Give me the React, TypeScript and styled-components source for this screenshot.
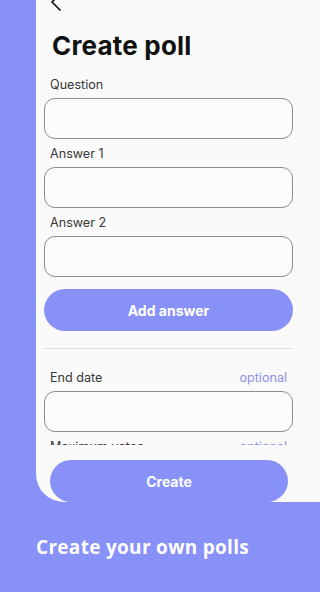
import React from "react";
import styled, { createGlobalStyle } from "styled-components";

const Global = createGlobalStyle`
  html, body { margin: 0; padding: 0; background: #8891f7; }
  * { box-sizing: border-box; }
`;

const Page = styled.div`
  width: 100%;
  height: 592px;
  overflow: hidden;
  background: #8891f7;
  display: flex;
  flex-direction: column;
`;

const Stage = styled.div`
  height: 502px;
  flex-shrink: 0;
  padding-left: 36px;
  display: flex;
`;

const Phone = styled.div`
  flex: 1;
  background: #fafafa;
  border-bottom-left-radius: 28px;
  display: flex;
  flex-direction: column;
  overflow: hidden;
  font-family: Inter, "Noto Sans", sans-serif;
`;

const Scroll = styled.div`
  height: 445px;
  flex-shrink: 0;
  overflow: hidden;
  width: 257px;
  padding: 0 0 0 8px;
  display: flex;
  flex-direction: column;
  & > * { flex-shrink: 0; }
`;

const Nav = styled.div`
  height: 29.5px;
  display: flex;
  align-items: flex-start;
  padding-left: 6px;
  svg { margin-top: -8px; }
`;

const Title = styled.h1`
  margin: 0 0 15.5px 8px;
  font-size: 26px;
  line-height: 32px;
  font-weight: 700;
  color: #111;
  letter-spacing: 0.2px;
`;

const Field = styled.div`
  display: flex;
  flex-direction: column;
  gap: 5px;
  margin-bottom: 7px;
`;

const LabelRow = styled.div`
  display: flex;
  justify-content: space-between;
  padding: 0 6px;
  font-size: 12.6px;
  line-height: 16px;
  font-weight: 400;
  color: #383838;
`;

const Optional = styled.span`
  color: #8c91ec;
`;

const Input = styled.div`
  height: 41px;
  border: 1.2px solid #8d8d8d;
  border-radius: 11px;
  background: #fbfbfb;
`;

const PillButton = styled.button<{ $mt?: number }>`
  height: 42px;
  border: none;
  border-radius: 21px;
  background: #8891f7;
  color: #fff;
  font-family: Inter, "Noto Sans", sans-serif;
  font-weight: 700;
  font-size: 14px;
  margin-top: ${(p) => p.$mt ?? 0}px;
  padding: 0;
`;

const Divider = styled.hr`
  margin: 17px 1px 21px 0;
  border: none;
  height: 1px;
  background: #dedede;
`;

const BottomBar = styled.div`
  width: 252px;
  padding: 15px 0 0 14px;
  display: flex;
  flex-direction: column;
`;

const Caption = styled.div`
  padding: 32px 0 0 36px;
  color: #fff;
  font-family: "Open Sans", "Noto Sans", sans-serif;
  font-weight: 700;
  font-size: 19px;
  line-height: 26px;
  letter-spacing: 0.3px;
`;

const Back = () => (
  <svg width="12" height="20" viewBox="0 0 12 20" fill="none">
    <path d="M10 2 L2 10 L10 18" stroke="#111" strokeWidth="1.7" strokeLinecap="round" strokeLinejoin="round" />
  </svg>
);

const fields = [
  { label: "Question" },
  { label: "Answer 1" },
  { label: "Answer 2" },
];

export default function App() {
  return (
    <>
      <Global />
      <Page>
        <Stage>
          <Phone>
            <Scroll>
              <Nav>
                <Back />
              </Nav>
              <Title>Create poll</Title>
              {fields.map((f) => (
                <Field key={f.label}>
                  <LabelRow>
                    <span>{f.label}</span>
                  </LabelRow>
                  <Input />
                </Field>
              ))}
              <PillButton $mt={5}>Add answer</PillButton>
              <Divider />
              <Field>
                <LabelRow>
                  <span>End date</span>
                  <Optional>optional</Optional>
                </LabelRow>
                <Input />
              </Field>
              <Field>
                <LabelRow>
                  <span>Maximum votes</span>
                  <Optional>optional</Optional>
                </LabelRow>
                <Input />
              </Field>
            </Scroll>
            <BottomBar>
              <PillButton>Create</PillButton>
            </BottomBar>
          </Phone>
        </Stage>
        <Caption>Create your own polls</Caption>
      </Page>
    </>
  );
}
